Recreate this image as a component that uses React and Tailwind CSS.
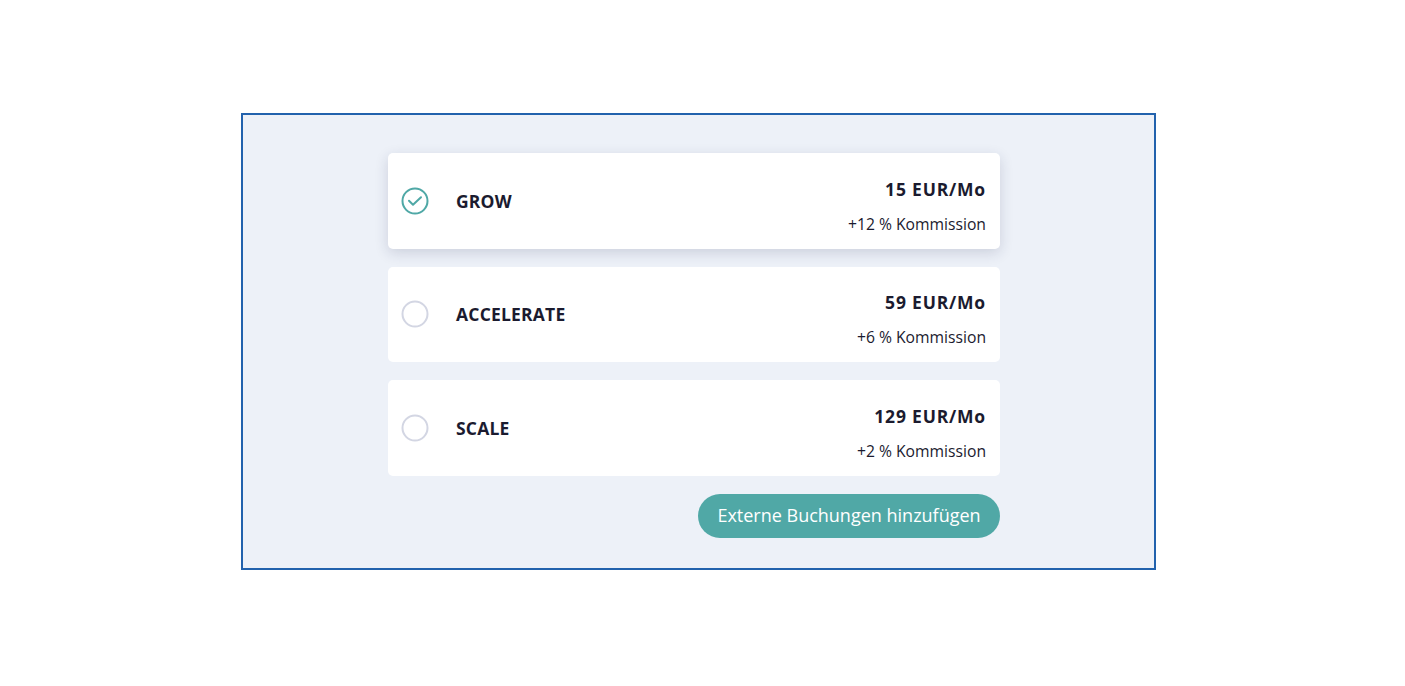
import { useState } from 'react';

const plans = [
  { id: 'grow', name: 'GROW', price: '15 EUR/Mo', fee: '+12 % Kommission' },
  { id: 'accelerate', name: 'ACCELERATE', price: '59 EUR/Mo', fee: '+6 % Kommission' },
  { id: 'scale', name: 'SCALE', price: '129 EUR/Mo', fee: '+2 % Kommission' },
];

function CheckCircle() {
  return (
    <svg width="28" height="28" viewBox="0 0 28 28" fill="none">
      <circle cx="14" cy="14" r="12.5" stroke="#4fa8a6" strokeWidth="2" />
      <path d="M8 13.8l4 4L20 10.2" stroke="#4fa8a6" strokeWidth="2" strokeLinecap="round" strokeLinejoin="round" />
    </svg>
  );
}

function EmptyCircle() {
  return (
    <svg width="28" height="28" viewBox="0 0 28 28" fill="none">
      <circle cx="14" cy="14" r="12.5" stroke="#d3d6e3" strokeWidth="2" />
    </svg>
  );
}

export default function App() {
  const [selected, setSelected] = useState('grow');

  return (
    <div className="min-h-screen bg-white pt-[113px] pl-[241px]" style={{ fontFamily: '"Open Sans", "Noto Sans", sans-serif' }}>
      <div className="w-[915px] h-[457px] border-2 border-[#2262ad] bg-[#edf1f8] pt-[38px] pl-[145px]">
        <div className="w-[612px] flex flex-col gap-[18px]">
          {plans.map((plan) => {
            const isSelected = selected === plan.id;
            return (
              <div
                key={plan.id}
                onClick={() => setSelected(plan.id)}
                className={`h-[95.5px] bg-white rounded-[5px] flex items-center pl-[13px] pr-[14px] cursor-pointer ${
                  isSelected ? 'shadow-[0_4px_14px_rgba(30,40,80,0.16)]' : ''
                }`}
              >
                {isSelected ? <CheckCircle /> : <EmptyCircle />}
                <span className="ml-[27px] text-[17.5px] font-bold text-[#1b1b2f] tracking-[0.2px]">{plan.name}</span>
                <div className="ml-auto flex flex-col items-end pt-[9px]">
                  <span className="text-[17.5px] font-bold text-[#1b1b2f] leading-[24px] tracking-[0.8px]">{plan.price}</span>
                  <span className="text-[15.7px] text-[#1b1b2f] leading-[20px] mt-[13px]">{plan.fee}</span>
                </div>
              </div>
            );
          })}
          <div className="flex justify-end">
            <button className="h-[44px] w-[302px] rounded-full bg-[#50a8a6] text-white text-[18px]">
              Externe Buchungen hinzufügen
            </button>
          </div>
        </div>
      </div>
    </div>
  );
}
